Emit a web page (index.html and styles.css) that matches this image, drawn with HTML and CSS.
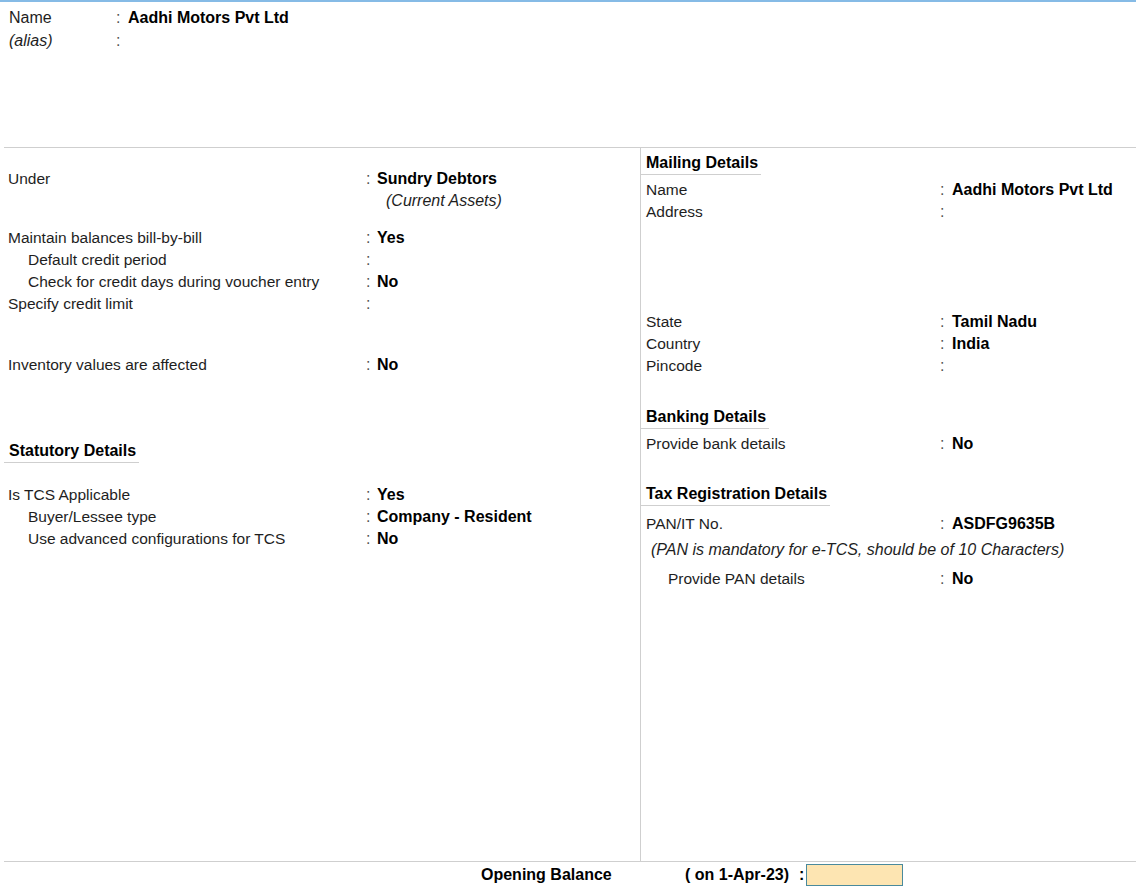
FILE: index.html
```html
<!DOCTYPE html>
<html lang="en">

<head>
    <meta charset="UTF-8">
    <title>Ledger Creation</title>
    <link rel="stylesheet" href="styles.css">
</head>

<body>
    <div class="top">
        <div class="row top-row">
            <span class="label top-label">Name</span>
            <span class="colon top-colon">:</span>
            <span class="value">Aadhi Motors Pvt Ltd</span>
        </div>
        <div class="row top-row">
            <span class="label top-label alias">(alias)</span>
            <span class="colon top-colon">:</span>
        </div>
    </div>

    <div class="main">
        <div class="left">
            <div class="group g-under">
                <div class="row">
                    <span class="label">Under</span>
                    <span class="colon">:</span>
                    <span class="value">Sundry Debtors</span>
                </div>
                <div class="row">
                    <span class="label"></span>
                    <span class="colon"></span>
                    <span class="parent">(Current Assets)</span>
                </div>
            </div>

            <div class="group g-bills">
                <div class="row">
                    <span class="label">Maintain balances bill-by-bill</span>
                    <span class="colon">:</span>
                    <span class="value">Yes</span>
                </div>
                <div class="row">
                    <span class="label sub">Default credit period</span>
                    <span class="colon">:</span>
                </div>
                <div class="row">
                    <span class="label sub">Check for credit days during voucher entry</span>
                    <span class="colon">:</span>
                    <span class="value">No</span>
                </div>
                <div class="row">
                    <span class="label">Specify credit limit</span>
                    <span class="colon">:</span>
                </div>
            </div>

            <div class="group g-inv">
                <div class="row">
                    <span class="label">Inventory values are affected</span>
                    <span class="colon">:</span>
                    <span class="value">No</span>
                </div>
            </div>

            <h4 class="heading h-stat">Statutory Details</h4>

            <div class="group g-tcs">
                <div class="row">
                    <span class="label">Is TCS Applicable</span>
                    <span class="colon">:</span>
                    <span class="value">Yes</span>
                </div>
                <div class="row">
                    <span class="label sub">Buyer/Lessee type</span>
                    <span class="colon">:</span>
                    <span class="value">Company - Resident</span>
                </div>
                <div class="row">
                    <span class="label sub">Use advanced configurations for TCS</span>
                    <span class="colon">:</span>
                    <span class="value">No</span>
                </div>
            </div>
        </div>

        <div class="right">
            <h4 class="heading h-mail">Mailing Details</h4>
            <div class="group g-mail">
                <div class="row">
                    <span class="label">Name</span>
                    <span class="colon">:</span>
                    <span class="value">Aadhi Motors Pvt Ltd</span>
                </div>
                <div class="row">
                    <span class="label">Address</span>
                    <span class="colon">:</span>
                </div>
            </div>

            <div class="group g-state">
                <div class="row">
                    <span class="label">State</span>
                    <span class="colon">:</span>
                    <span class="value">Tamil Nadu</span>
                </div>
                <div class="row">
                    <span class="label">Country</span>
                    <span class="colon">:</span>
                    <span class="value">India</span>
                </div>
                <div class="row">
                    <span class="label">Pincode</span>
                    <span class="colon">:</span>
                </div>
            </div>

            <h4 class="heading h-bank">Banking Details</h4>
            <div class="group g-bank">
                <div class="row">
                    <span class="label">Provide bank details</span>
                    <span class="colon">:</span>
                    <span class="value">No</span>
                </div>
            </div>

            <h4 class="heading h-tax">Tax Registration Details</h4>
            <div class="group g-pan">
                <div class="row">
                    <span class="label">PAN/IT No.</span>
                    <span class="colon">:</span>
                    <span class="value">ASDFG9635B</span>
                </div>
            </div>
            <div class="note">(PAN is mandatory for e-TCS, should be of 10 Characters)</div>
            <div class="group g-pandet">
                <div class="row">
                    <span class="label sub">Provide PAN details</span>
                    <span class="colon">:</span>
                    <span class="value">No</span>
                </div>
            </div>
        </div>
    </div>

    <div class="footer">
        <span class="ob-label">Opening Balance</span>
        <span class="ob-date">( on 1-Apr-23)</span>
        <span class="ob-colon">:</span>
        <span class="ob-input"></span>
    </div>
</body>

</html>
```

FILE: styles.css
```css
body {
    margin: 0;
    font-family: 'Liberation Sans', Arial, sans-serif;
    font-size: 16px;
    color: #1e1e1e;
    background: #fff;
    width: 1136px;
    height: 888px;
    overflow: hidden;
}

.top {
    border-top: 2px solid #86bbe6;
    height: 141px;
    padding: 4px 0 0 9px;
}

.row {
    display: flex;
    height: 22px;
    line-height: 22px;
    white-space: nowrap;
}

.top-row {
    height: 23px;
    line-height: 23px;
}

.label {
    font-size: 15.5px;
}

.top-label {
    width: 107px;
    font-size: 16px;
}

.alias {
    font-style: italic;
}

.colon {
    width: 11px;
    color: #555;
}

.top-colon {
    width: 12px;
}

.value {
    font-weight: bold;
    color: #000;
}

.parent {
    font-style: italic;
    padding-left: 9px;
}

.main {
    display: flex;
    margin-left: 4px;
    border-top: 1px solid #cfcfcf;
    height: 713px;
}

.left {
    width: 636px;
    border-right: 1px solid #cfcfcf;
}

.left .row {
    padding-left: 4px;
}

.left .label {
    width: 358px;
}

.right {
    flex: 1;
}

.right .row {
    padding-left: 5px;
}

.right .label {
    width: 294px;
}

.right .colon {
    width: 12px;
}

.sub {
    padding-left: 20px;
    box-sizing: border-box;
}

.right .sub {
    padding-left: 22px;
}

.heading {
    display: inline-block;
    margin: 0;
    height: 22px;
    line-height: 22px;
    padding: 0 3px 0 5px;
    border-bottom: 1px solid #cfcfcf;
    font-size: 16px;
    color: #000;
}

.group {
    display: block;
}

/* left column spacing */
.g-under {
    margin-top: 20px;
}

.g-bills {
    margin-top: 15px;
}

.g-inv {
    margin-top: 39px;
}

.h-stat {
    margin-top: 64px;
}

.g-tcs {
    margin-top: 21px;
}

/* right column spacing */
.h-mail {
    margin-top: 4px;
}

.g-mail {
    margin-top: 4px;
}

.g-state {
    margin-top: 88px;
}

.h-bank {
    margin-top: 29px;
}

.g-bank {
    margin-top: 4px;
}

.h-tax {
    margin-top: 28px;
}

.g-pan {
    margin-top: 7px;
}

.note {
    margin-top: 4px;
    padding-left: 10px;
    height: 22px;
    line-height: 22px;
    font-style: italic;
    white-space: nowrap;
}

.g-pandet {
    margin-top: 7px;
}

.footer {
    display: flex;
    align-items: center;
    margin-left: 4px;
    border-top: 1px solid #cfcfcf;
    height: 26px;
    padding-left: 477px;
    font-weight: bold;
    color: #000;
}

.ob-label {
    width: 204px;
}

.ob-date {
    width: 114px;
}

.ob-colon {
    width: 7px;
}

.ob-input {
    width: 95px;
    height: 20px;
    background: #fde5b2;
    border: 1px solid #4a8a9c;
}
```
